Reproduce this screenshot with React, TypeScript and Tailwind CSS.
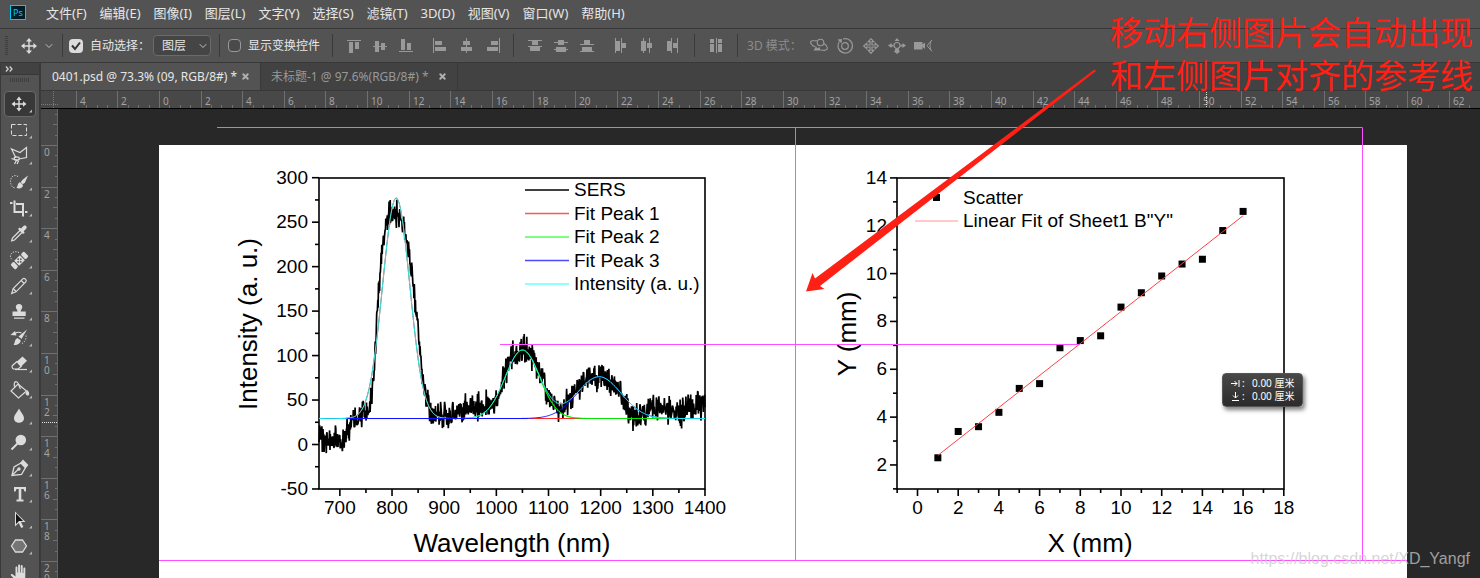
import React from 'react';
import { ChevronDown, X } from 'lucide-react';

type Rect = [number, number, number, number];

const MENUS = ['文件(F)', '编辑(E)', '图像(I)', '图层(L)', '文字(Y)', '选择(S)', '滤镜(T)', '3D(D)', '视图(V)', '窗口(W)', '帮助(H)'];

// Align / distribute glyphs: lists of [x, y, width, height]
const ALIGN_VERTICAL: { name: string; rects: Rect[] }[] = [
  { name: 'Align top', rects: [[1, 2, 14, 1], [3, 4, 4, 11], [9, 4, 4, 7]] },
  { name: 'Align middle', rects: [[1, 8, 14, 1], [3, 3, 4, 11], [9, 5, 4, 7]] },
  { name: 'Align bottom', rects: [[1, 13, 14, 1], [3, 1, 4, 11], [9, 5, 4, 7]] },
];
const ALIGN_HORIZONTAL: { name: string; rects: Rect[] }[] = [
  { name: 'Align left', rects: [[1, 0, 1, 15], [3, 3, 7, 4], [3, 9, 11, 4]] },
  { name: 'Align center', rects: [[8, 0, 1, 15], [5, 3, 7, 4], [3, 9, 11, 4]] },
  { name: 'Align right', rects: [[15, 0, 1, 15], [7, 3, 7, 4], [3, 9, 11, 4]] },
];
const DISTRIBUTE_VERTICAL: { name: string; rects: Rect[] }[] = [
  { name: 'Distribute top', rects: [[1, 2, 14, 1], [5, 3, 6, 4], [1, 8, 14, 1], [3, 9, 10, 4]] },
  { name: 'Distribute middle', rects: [[1, 4, 14, 1], [5, 2, 6, 5], [1, 11, 14, 1], [3, 9, 10, 5]] },
  { name: 'Distribute bottom', rects: [[1, 6, 14, 1], [5, 2, 6, 4], [1, 13, 14, 1], [3, 9, 10, 4]] },
];
const DISTRIBUTE_HORIZONTAL: { name: string; rects: Rect[] }[] = [
  { name: 'Distribute left', rects: [[2, 0, 1, 15], [3, 3, 4, 10], [8, 0, 1, 15], [9, 5, 4, 5]] },
  { name: 'Distribute center', rects: [[4, 0, 1, 15], [2, 3, 5, 10], [10, 0, 1, 15], [8, 5, 5, 5]] },
  { name: 'Distribute right', rects: [[6, 0, 1, 15], [2, 3, 4, 10], [12, 0, 1, 15], [8, 5, 4, 5]] },
];
const AUTO_ALIGN: { name: string; rects: Rect[] }[] = [
  { name: 'Auto-align layers', rects: [[2, 1, 4, 4], [2, 6, 4, 8], [8, 0, 1, 15], [10, 1, 4, 4], [10, 6, 4, 8]] },
];

const GlyphGroup: React.FC<{ items: { name: string; rects: Rect[] }[] }> = ({ items }) => (
  <div className="flex items-center gap-[10px]">
    {items.map((item) => (
      <button key={item.name} type="button" aria-label={item.name} className="text-[#999999]">
        <svg width="16" height="16" viewBox="0 0 16 16" fill="currentColor" shapeRendering="crispEdges">
          {item.rects.map(([x, y, w, h], i) => <rect key={i} x={x} y={y} width={w} height={h} />)}
        </svg>
      </button>
    ))}
  </div>
);

const Separator: React.FC = () => <span className="w-px h-[23px] bg-[#3a3a3a] shrink-0" />;

const MoveGlyph: React.FC<{ size: number }> = ({ size }) => (
  <svg width={size} height={size} viewBox="0 0 16 16" fill="#dcdcdc">
    <path d="M7.3 3v4.3H3v1.4h4.3V13h1.4V8.7H13V7.3H8.7V3z" />
    <path d="M8 0l3 3.6H5zM8 16l3-3.6H5zM0 8l3.6-3v6zM16 8l-3.6-3v6z" />
  </svg>
);

const Mode3DIcons: React.FC = () => (
  <div className="flex items-center gap-[8px] ml-2">
    <button type="button" aria-label="Orbit" className="text-[#999999]">
      <svg width="18" height="16" viewBox="0 0 18 16" fill="none" stroke="currentColor" strokeWidth="1.1">
        <circle cx="10.500" cy="4.500" r="3.300" />
        <path d="M7 2.800H2.500C.8 2.800.2 4.200.8 5.300 1.500 7 3.500 8.300 5.500 9M14 5.500c2.500 1.700 4 4 3 5.700-1 1.300-3.500 1.500-6.500.6" />
        <path d="M3.500 12.500h7L9.500 9 7.500 10.500 6 8.500z" fill="currentColor" stroke="none" />
      </svg>
    </button>
    <button type="button" aria-label="Roll" className="text-[#999999]">
      <svg width="18" height="16" viewBox="0 0 18 16" fill="none" stroke="currentColor" strokeWidth="1.2">
        <circle cx="9" cy="8" r="3.300" />
        <path d="M3.500 3.500A7.200 7.200 0 1 0 7 1" />
        <path d="M1.500 1.500l4.500-.5-.5 4.500z" fill="currentColor" stroke="none" />
      </svg>
    </button>
    <button type="button" aria-label="Drag" className="text-[#999999]">
      <svg width="18" height="16" viewBox="0 0 18 16" fill="none" stroke="currentColor" strokeWidth="1.2">
        <path d="M9 .7l2.700 3H10v3.300h3.300V5.300l3 2.700-3 2.700V9H10v3.300h1.700l-2.700 3-2.700-3H8V9H4.700v1.700l-3-2.700 3-2.700V7H8V3.700H6.300z" />
      </svg>
    </button>
    <button type="button" aria-label="Slide" className="text-[#999999]">
      <svg width="18" height="16" viewBox="0 0 18 16" fill="currentColor">
        <circle cx="9" cy="7.500" r="3" fill="none" stroke="currentColor" strokeWidth="1.200" />
        <path d="M9 0l2.500 3h-5zM0 7.500L3.500 5v1.800h2v1.600h-2V10zM18 7.500L14.500 5v1.800h-2v1.600h2V10zM7 11h4v2h1.500L9 16l-3.500-3H7z" />
      </svg>
    </button>
    <button type="button" aria-label="3D camera" className="text-[#999999]">
      <svg width="19" height="16" viewBox="0 0 19 16" fill="currentColor">
        <path d="M0 4h8.500v2.500L11 4.500v6.500L8.500 9v2.500H0z" />
        <path d="M18 2l-5 5.700 5 5.700M16.800 3.500c-1 3-1 5.500 0 8.500" fill="none" stroke="currentColor" strokeWidth="1" />
      </svg>
    </button>
  </div>
);

const TOOLS: { name: string; art: React.ReactNode }[] = [
  {
    name: 'Move',
    art: (
      <g fill="#dcdcdc">
        <path d="M11.300 7v4.300H7v1.400h4.300V17h1.400v-4.300H17v-1.400h-4.300V7z" />
        <path d="M12 4.500L14.700 8H9.300zM12 19.500l2.700-3.500H9.300zM4.500 12L8 9.300v5.400zM19.500 12L16 9.300v5.400z" />
      </g>
    ),
  },
  { name: 'Marquee', art: <rect x="4.500" y="6.500" width="15" height="11" fill="none" stroke="#dcdcdc" strokeDasharray="4 2" /> },
  {
    name: 'Polygonal lasso',
    art: (
      <g fill="none" stroke="#dcdcdc" strokeWidth="1.200">
        <path d="M9 14L4.500 5l8.500 3.500L19.500 3.500v10L12 15" />
        <ellipse cx="9.700" cy="14.500" rx="2.600" ry="1.600" />
        <path d="M4.500 14.500l7 2.500-1.500 3M10 15.500L7.500 20" />
      </g>
    ),
  },
  {
    name: 'Quick selection',
    art: (
      <g>
        <path d="M11 6.500C7 4 3.500 7 3.500 11.500S6 18 8.500 18" fill="none" stroke="#dcdcdc" strokeDasharray="1.200 1.400" />
        <path d="M21 5.500l-3 7-2.200 1.800-2.200-2 2-2.500z" fill="#dcdcdc" />
        <path d="M13 12.300l3 2.700c0 3-3.500 4.500-6.700 2.800 1.500-.5 1.200-5 3.700-5.500z" fill="#dcdcdc" />
      </g>
    ),
  },
  { name: 'Crop', art: <path d="M3 7h2.500M7.500 4.500V16H17M9 8h7v12.500M18 16H20.500" fill="none" stroke="#dcdcdc" strokeWidth="2" /> },
  {
    name: 'Eyedropper',
    art: (
      <g>
        <path d="M13 8.500l-7.500 7.500-.8 2.800 2.800-.8L15 10.500" fill="none" stroke="#dcdcdc" strokeWidth="1.300" />
        <path d="M11 7l1.500-1.500 1.500 1L16.500 4c1.800-1.500 4.200.8 2.700 2.700l-2.500 2.500 1 1.500L16 12z" fill="#dcdcdc" />
      </g>
    ),
  },
  {
    name: 'Healing brush',
    art: (
      <g>
        <path d="M12 4.500c-4-2-8.500 0-8.500 3.700 0 1.500.5 2.500 1.500 3.300" fill="none" stroke="#dcdcdc" strokeDasharray="1.200 1.400" />
        <g transform="rotate(-45 12.500 12.500)" fill="#dcdcdc">
          <rect x="3" y="9" width="4.500" height="7" rx="1.500" />
          <rect x="8.500" y="9" width="8" height="7" />
          <rect x="17.500" y="9" width="4.500" height="7" rx="1.500" />
          <g fill="#535353">
            <circle cx="12.500" cy="10.700" r=".9" />
            <circle cx="10.600" cy="12.500" r=".9" />
            <circle cx="14.400" cy="12.500" r=".9" />
            <circle cx="12.500" cy="14.300" r=".9" />
          </g>
        </g>
      </g>
    ),
  },
  {
    name: 'Pencil',
    art: (
      <g fill="none" stroke="#dcdcdc" strokeWidth="1.200">
        <path d="M4.700 19.500l1.500-5L16 4.700c1.500-1 4 1.300 3 3L9 17.800z" />
        <path d="M6.200 14.500L9 17.500M14.200 6.500l3 3" />
      </g>
    ),
  },
  { name: 'Clone stamp', art: <path d="M12 4c2.200 0 3.300 1.500 3.300 3 0 2-1.600 2.500-1.600 4.500h5v4.500H5.500v-4.500h5c0-2-1.700-2.500-1.700-4.500 0-1.500 1-3 3.200-3zM7 17.500h10.500v1.300H7z" fill="#dcdcdc" /> },
  {
    name: 'History brush',
    art: (
      <g>
        <path d="M20 3.500l-5.500 9.500-3-2.500z" fill="#dcdcdc" />
        <path d="M10.500 12l3.200 2.200c0 3.300-3.500 5.300-7.200 4.800 1.800-2 .7-5.500 4-7z" fill="#dcdcdc" />
        <path d="M8 7.500c2-1.500 4.500-1.500 6.500-.5" fill="none" stroke="#dcdcdc" strokeWidth="1.200" />
        <path d="M3.500 9L8 5l1.500 4.500z" fill="#dcdcdc" />
        <path d="M19 9.500c.5 4-1.500 7-5 8.500" fill="none" stroke="#dcdcdc" strokeDasharray="1.200 1.600" />
      </g>
    ),
  },
  {
    name: 'Eraser',
    art: (
      <g>
        <path d="M10 9.500l5.500-5 4.500 4.200-5.800 5.800z" fill="#dcdcdc" />
        <path d="M10 9.500l-4.500 4c-.8.800-.5 3 1 3.500h4.500l3.200-2.500z" fill="none" stroke="#dcdcdc" strokeWidth="1.200" />
        <path d="M8 17.500h12" stroke="#dcdcdc" strokeWidth="1.200" />
      </g>
    ),
  },
  {
    name: 'Paint bucket',
    art: (
      <g fill="none" stroke="#dcdcdc" strokeWidth="1.200">
        <path d="M11 6l8.500 7-8 7L4 13z" />
        <path d="M8 9.500C6 5 8 3 10 4s2 5 3.500 7" />
        <path d="M20 12c2 1.500 2.500 3 2 5-1.500 1.500-3 0-3.500-1.500z" fill="#dcdcdc" stroke="none" />
      </g>
    ),
  },
  { name: 'Blur', art: <path d="M12 4.500c2 4 5 6.500 5 9.700 0 6-10 6-10 0 0-3.200 3-5.700 5-9.700z" fill="#dcdcdc" /> },
  {
    name: 'Dodge',
    art: (
      <g>
        <circle cx="13.800" cy="10" r="5.300" fill="#dcdcdc" />
        <path d="M10.500 13.500L4.500 19.500" stroke="#dcdcdc" strokeWidth="2" />
      </g>
    ),
  },
  {
    name: 'Pen',
    art: (
      <g fill="none" stroke="#dcdcdc" strokeWidth="1.300">
        <path d="M5 19.500l2-8.500 7-4 4.500 4.500-4 7z" />
        <path d="M14 7l2-2.500 4.500 4.500-2 2.500z" fill="#dcdcdc" />
        <path d="M5 19.500l6.500-6.500" />
        <circle cx="12" cy="13" r="1" fill="#dcdcdc" />
      </g>
    ),
  },
  { name: 'Type', art: <path d="M7 5h12v4.500h-1.500l-1-2.500h-2.200v10.500h2.200V19.500h-7v-2h2.200V7H9.500l-1 2.500H7z" fill="#dcdcdc" /> },
  {
    name: 'Path selection',
    art: (
      <g>
        <path d="M8 3.500v15l3.700-3.500L14.200 20l2.200-1L14 14h4.500z" fill="#dcdcdc" />
        <path d="M9 5.500v10.500l3-3h4z" fill="#161616" />
      </g>
    ),
  },
  { name: 'Polygon', art: <path d="M8.500 6h7l4 6-4 6h-7l-4-6z" fill="#757575" stroke="#dcdcdc" strokeWidth="1.300" /> },
  {
    name: 'Hand',
    art: (
      <path
        d="M9.500 22c-1-1-2.200-3-5.500-6.500-.8-1.200.6-2 1.600-1.300L8.500 16.500V7.500c0-1.500 1.900-1.500 1.900 0v5h.7V5.500c0-1.500 2-1.500 2 0v7h.7V6c0-1.500 1.900-1.500 1.900 0v7h.7V8.500c0-1.500 1.900-1.500 1.900 0V16c0 3-1 4.500-2 6z"
        fill="#dcdcdc"
      />
    ),
  },
];

const Toolbar: React.FC = () => (
  <aside className="w-[41px] shrink-0 border-l border-r-2 border-[#3a3a3a] bg-[#535353]">
    <div className="h-3 bg-[#424242] border-b border-[#383838] flex items-center pl-1">
      <svg width="8" height="6" viewBox="0 0 8 6" fill="none" stroke="#d0d0d0" strokeWidth="1.300">
        <path d="M1 .5L3.200 3 1 5.500M4.700 .5L7 3 4.700 5.500" />
      </svg>
    </div>
    <div className="h-4 pt-[3px] pl-[9px]">
      <svg width="20" height="4" viewBox="0 0 20 4">
        {Array.from({ length: 10 }, (_, i) => <rect key={i} x={i * 2} y="0" width="1" height="4" fill="#3e3e3e" />)}
      </svg>
    </div>
    <div className="flex flex-col">
      {TOOLS.map((tool, i) => (
        <button
          key={tool.name}
          type="button"
          aria-label={tool.name}
          className={`mx-[3px] h-[26px] w-8 flex items-start rounded-sm border ${i === 0 ? 'bg-[#383838] border-[#696969]' : 'border-transparent'}`}
        >
          <svg width="24" height="24" viewBox="0 0 24 24" className="ml-[2px] shrink-0 overflow-visible">
            {tool.art}
            {i < TOOLS.length - 1 && <path d="M25 17.500V20.500H22z" fill="#b8b8b8" />}
          </svg>
        </button>
      ))}
    </div>
  </aside>
);

// One ruler unit is 20.8px at the current zoom; the document origin is at (101, 36) in the canvas
const UNIT = 20.8;

const HorizontalRuler: React.FC = () => (
  <svg className="flex-1 h-[17px] font-['Noto_Sans',sans-serif] text-[10px]" shapeRendering="crispEdges">
    {Array.from({ length: 136 }, (_, i) => {
      const step = i - 8;
      const x = Math.round(101 + (step * UNIT) / 2);
      const major = step % 4 === 0;
      return (
        <g key={i}>
          <rect x={x} y={major ? 0 : 14} width="1" height={major ? 17 : 3} fill="#707070" />
          {major && <text x={x + 4} y="14" fill="#a3a3a3">{Math.abs(step / 2)}</text>}
        </g>
      );
    })}
    <path d="M1148.500 1V17" stroke="#e0e0e0" strokeDasharray="1 1" />
  </svg>
);

const VerticalRuler: React.FC = () => (
  <svg className="w-[17px] shrink-0 h-full bg-[#484848] font-['Noto_Sans',sans-serif] text-[10px]" shapeRendering="crispEdges">
    {Array.from({ length: 46 }, (_, i) => {
      const step = i - 3;
      const y = Math.round(36 + (step * UNIT) / 2);
      const major = step % 4 === 0;
      const tick = major ? 17 : step % 2 === 0 ? 5 : 3;
      return (
        <g key={i}>
          <rect x={17 - tick} y={y} width={tick} height="1" fill="#707070" />
          {major &&
            String(Math.abs(step / 2)).split('').map((digit, n) => (
              <text key={n} x="3" y={y + 11 + n * 10} fill="#a3a3a3">{digit}</text>
            ))}
        </g>
      );
    })}
    <rect x="16" y="0" width="1" height="100%" fill="#666666" />
    <path d="M1 313.500H16" stroke="#e0e0e0" strokeDasharray="1 1" />
  </svg>
);

// Spectrum chart
const sx = (v: number) => 160 + (v - 660) * 0.5216;
const sy = (v: number) => 299.5 - v * 0.8893;

const SPECTRUM: [number, number][] = [
  [660, 14], [668, 6], [690, 3], [700, 6], [710, 10], [720, 24], [735, 28], [745, 40], [752, 34], [762, 58], [768, 110], [773, 160],
  [778, 200], [783, 228], [788, 248], [793, 260], [803, 259], [812, 256], [822, 246], [832, 218], [842, 178], [851, 122], [858, 75],
  [865, 50], [875, 36], [890, 31], [910, 31], [930, 37], [942, 43], [958, 37], [965, 40], [980, 42], [1000, 48], [1010, 68], [1020, 88],
  [1035, 103], [1050, 107], [1065, 103], [1080, 86], [1090, 70], [1100, 54], [1110, 46], [1120, 41], [1130, 43], [1145, 54],
  [1160, 66], [1180, 74], [1200, 76], [1220, 70], [1235, 60], [1250, 45], [1260, 34], [1275, 32], [1290, 42], [1310, 42], [1330, 40],
  [1345, 35], [1360, 38], [1380, 42], [1400, 48],
];

const buildSpectrum = () => {
  let seed = 20;
  const random = () => {
    seed = (seed * 16807) % 2147483647;
    return seed / 2147483647;
  };
  const points: string[] = [];
  let segment = 0;
  for (let v = 660; v <= 1400; v += 0.7) {
    while (segment < SPECTRUM.length - 2 && SPECTRUM[segment + 1][0] < v) segment++;
    const [x0, y0] = SPECTRUM[segment];
    const [x1, y1] = SPECTRUM[segment + 1];
    const mean = y0 + ((y1 - y0) * (v - x0)) / (x1 - x0);
    const noise = (random() + random() + random() - 1.5) * 15;
    points.push(`${sx(v).toFixed(1)},${sy(mean + noise).toFixed(1)}`);
  }
  return points.join(' ');
};

const BASELINE = 29.2;
const PEAKS: Rect[] = [[808, 248, 26, 0], [1050, 77, 33, 0], [1197, 47, 42, 0]];
const gauss = (v: number, [center, height, sigma]: Rect) => height * Math.exp(-((v - center) ** 2) / (2 * sigma * sigma));
const buildCurve = (peaks: Rect[]) => {
  const points: string[] = [];
  for (let v = 660; v <= 1400; v += 2) {
    const total = peaks.reduce((sum, peak) => sum + gauss(v, peak), BASELINE);
    points.push(`${sx(v).toFixed(1)},${sy(total).toFixed(1)}`);
  }
  return points.join(' ');
};

const LEGEND = [
  { label: 'SERS', color: '#000000' },
  { label: 'Fit Peak 1', color: '#ff5555' },
  { label: 'Fit Peak 2', color: '#55ff55' },
  { label: 'Fit Peak 3', color: '#4a4aff' },
  { label: 'Intensity (a. u.)', color: '#66ffff' },
];

const SpectrumChart: React.FC = () => (
  <svg width="636" height="433" viewBox="0 0 636 433" className="shrink-0 font-['Liberation_Sans',Arial,sans-serif] text-[19px]">
    <g stroke="#000000" strokeWidth="1.600" fill="none">
      <rect x="160" y="33" width="386" height="311" />
      {Array.from({ length: 15 }, (_, i) => (
        <path key={i} d={`M160 ${sy(i * 25 - 50)}h${i % 2 ? -4 : -7}`} />
      ))}
      {Array.from({ length: 15 }, (_, i) => (
        <path key={i} d={`M${sx(700 + i * 50)} 344v${i % 2 ? 4 : 7}`} />
      ))}
    </g>
    {[300, 250, 200, 150, 100, 50, 0, -50].map((v) => (
      <text key={v} x="149" y={sy(v) + 6} textAnchor="end">{v}</text>
    ))}
    {[700, 800, 900, 1000, 1100, 1200, 1300, 1400].map((v) => (
      <text key={v} x={sx(v)} y="369" textAnchor="middle">{v}</text>
    ))}
    <polyline points={buildSpectrum()} fill="none" stroke="#000000" strokeWidth="1.700" strokeLinejoin="bevel" />
    <g fill="none" strokeWidth="1">
      <polyline points={buildCurve([PEAKS[0]])} stroke="#ff2020" />
      <polyline points={buildCurve([PEAKS[1]])} stroke="#00f000" />
      <polyline points={buildCurve([PEAKS[2]])} stroke="#1010ff" />
      <polyline points={buildCurve([PEAKS[0]]).split(' ').slice(205, 253).join(' ')} stroke="#ff2020" />
      <polyline points={buildCurve([PEAKS[1]]).split(' ').slice(205, 340).join(' ')} stroke="#00e800" />
      <polyline points={buildCurve(PEAKS).split(' ').slice(0, 32).join(' ')} stroke="#20f0f0" />
      <polyline points={buildCurve(PEAKS).split(' ').slice(31).join(' ')} stroke="#20f0f0" />
      <path d={`M${sx(715)} ${sy(BASELINE)}H${sx(1060)}`} stroke="#1010ff" />
    </g>
    {LEGEND.map((item, i) => (
      <g key={item.label}>
        <path d={`M366 ${45 + i * 23.5}h44`} stroke={item.color} strokeWidth="1.300" />
        <text x="415" y={51 + i * 23.5}>{item.label}</text>
      </g>
    ))}
    <text x="353" y="407" textAnchor="middle" className="text-[26px]">Wavelength (nm)</text>
    <text transform="translate(98 179) rotate(-90)" textAnchor="middle" className="text-[26px]">Intensity (a. u.)</text>
  </svg>
);

// Scatter chart
const px = (v: number) => 122.5 + v * 20.35;
const py = (v: number) => 367.8 - v * 23.92;
const SAMPLES = [2.3, 3.4, 3.6, 4.2, 5.2, 5.4, 6.9, 7.2, 7.4, 8.6, 9.2, 9.9, 10.4, 10.6, 11.8, 12.6];

const ScatterChart: React.FC = () => (
  <svg width="612" height="433" viewBox="0 0 612 433" className="shrink-0 font-['Liberation_Sans',Arial,sans-serif] text-[19px]">
    <g stroke="#000000" strokeWidth="1.600" fill="none">
      <rect x="102" y="33" width="387" height="311" />
      {Array.from({ length: 14 }, (_, i) => (
        <path key={i} d={`M102 ${py(i + 1)}h${i % 2 ? -7 : -4}`} />
      ))}
      {Array.from({ length: 20 }, (_, i) => (
        <path key={i} d={`M${px(i - 1)} 344v${i % 2 ? 7 : 4}`} />
      ))}
    </g>
    {[14, 12, 10, 8, 6, 4, 2].map((v) => (
      <text key={v} x="92" y={py(v) + 6} textAnchor="end">{v}</text>
    ))}
    {[0, 2, 4, 6, 8, 10, 12, 14, 16, 18].map((v) => (
      <text key={v} x={px(v)} y="369" textAnchor="middle">{v}</text>
    ))}
    {SAMPLES.map((v, i) => <rect key={i} x={px(i + 1) - 3.5} y={py(v) - 3.5} width="7" height="7" />)}
    <path d={`M${px(1)} ${py(2.4)}L${px(16)} ${py(12.42)}`} stroke="#ff4040" strokeWidth="1" />
    <rect x="138" y="49" width="7" height="7" />
    <path d="M120 76h43" stroke="#ffb8b8" strokeWidth="1.600" />
    <text x="168" y="59">Scatter</text>
    <text x="168" y="82">Linear Fit of Sheet1 B"Y"</text>
    <text x="295" y="407" textAnchor="middle" className="text-[26px]">X (mm)</text>
    <text transform="translate(61 189) rotate(-90)" textAnchor="middle" className="text-[26px]">Y (mm)</text>
  </svg>
);

const Readout: React.FC = () => (
  <div className="absolute left-[1164px] top-[264px] w-[81px] py-[3px] pl-[8px] rounded bg-gradient-to-b from-[#484848] to-[#2b2b2b] border border-[#555555] shadow-[2px_3px_4px_rgba(0,0,0,0.5)] text-white text-[10px] leading-[13px]">
    <div className="flex items-center whitespace-nowrap">
      <svg width="9" height="9" viewBox="0 0 9 9" fill="none" stroke="white"><path d="M0 4.500H6M3.500 2L6 4.500 3.500 7M8 1V8" /></svg>
      <span className="w-3 pl-[2px]">:</span>
      <span>0.00 厘米</span>
    </div>
    <div className="flex items-center whitespace-nowrap">
      <svg width="9" height="9" viewBox="0 0 9 9" fill="none" stroke="white"><path d="M4.500 0V6M2 3.500L4.500 6 7 3.500M1 8.500H8" /></svg>
      <span className="w-3 pl-[2px]">:</span>
      <span>0.00 厘米</span>
    </div>
  </div>
);

const Canvas: React.FC = () => (
  <div className="relative flex-1 min-w-0 overflow-hidden bg-[#282828] pt-9 pl-[101px] pr-[73px]">
    <div className="flex h-full bg-white overflow-hidden">
      <SpectrumChart />
      <ScatterChart />
    </div>
    {/* smart guides */}
    <svg className="absolute inset-0 w-full h-full pointer-events-none" fill="none" stroke="#ff4dff" strokeWidth="1">
      <path d="M159 18.500H1304.500V451M737.500 19V451M101 451.500H1349M442 235.500H1022" />
    </svg>
    <Readout />
  </div>
);

const App: React.FC = () => {
  return (
    <div className="relative h-screen overflow-hidden flex flex-col bg-[#535353] text-[#e6e6e6] text-xs font-['Noto_Sans','Noto_Sans_CJK_SC',sans-serif]">
      <header className="h-[29px] shrink-0 flex items-center border-b border-[#383838] pl-[10px] pb-[3px]">
        <div className="w-4 h-[15px] border border-[#00c8ff] bg-[#001e28] text-[#00c8ff] text-[9px] leading-[13px] text-center">Ps</div>
        <nav className="flex gap-[13px] ml-5 text-[13px] leading-5">
          {MENUS.map((menu) => <button key={menu} type="button" className="whitespace-nowrap">{menu}</button>)}
        </nav>
      </header>

      <div className="h-[34px] shrink-0 flex items-center border-b border-[#383838] pl-[5px] whitespace-nowrap">
        <svg width="3" height="20" viewBox="0 0 3 20">
          {Array.from({ length: 10 }, (_, i) => <rect key={i} x="0" y={i * 2} width="3" height="1" fill="#3e3e3e" />)}
        </svg>
        <button type="button" aria-label="Current tool" className="flex items-center gap-[6px] ml-[13px] mr-[7px]">
          <MoveGlyph size={16} />
          <ChevronDown size={12} className="text-[#c0c0c0]" />
        </button>
        <Separator />
        <label className="flex items-center gap-[7px] ml-[6px]">
          <span className="relative flex">
            <input type="checkbox" defaultChecked className="appearance-none w-[14px] h-[14px] rounded-sm bg-[#dcdcdc]" />
            <svg className="absolute inset-0 pointer-events-none" width="14" height="14" viewBox="0 0 14 14" fill="none" stroke="#333333" strokeWidth="2">
              <path d="M3 6.500L6 10 11 3.500" />
            </svg>
          </span>
          自动选择：
        </label>
        <div className="relative ml-[3px] mr-2">
          <select aria-label="Auto-select target" className="appearance-none block w-[58px] h-[21px] pl-2 rounded-sm border border-[#6a6a6a] bg-[#454545] text-[#e6e6e6]">
            <option>图层</option>
          </select>
          <ChevronDown size={12} className="absolute right-[2px] top-[5px] text-[#c0c0c0] pointer-events-none" />
        </div>
        <Separator />
        <label className="flex items-center gap-[7px] ml-2 mr-3">
          <input type="checkbox" className="appearance-none w-[13px] h-[13px] rounded-sm border border-[#999999] bg-[#4a4a4a]" />
          显示变换控件
        </label>
        <Separator />
        <div className="flex items-center gap-[18px] mx-[13px]">
          <GlyphGroup items={ALIGN_VERTICAL} />
          <GlyphGroup items={ALIGN_HORIZONTAL} />
        </div>
        <Separator />
        <div className="flex items-center gap-[18px] mx-[13px]">
          <GlyphGroup items={DISTRIBUTE_VERTICAL} />
          <GlyphGroup items={DISTRIBUTE_HORIZONTAL} />
        </div>
        <Separator />
        <div className="mx-[13px]"><GlyphGroup items={AUTO_ALIGN} /></div>
        <Separator />
        <span className="ml-[9px] text-[#8c8c8c]">3D 模式：</span>
        <Mode3DIcons />
      </div>

      <div className="flex flex-1 min-h-0">
        <Toolbar />
        <main className="flex-1 min-w-0 flex flex-col">
          <div className="h-[28px] shrink-0 flex bg-[#424242] border-b border-[#383838] whitespace-nowrap">
            <div className="w-[220px] flex items-center justify-between pl-[11px] pr-[10px] bg-[#535353] border-r border-[#383838]">
              <button type="button">0401.psd @ 73.3% (09, RGB/8#) *</button>
              <button type="button" aria-label="Close 0401.psd"><X size={9} strokeWidth={5} className="text-[#b0b0b0]" /></button>
            </div>
            <div className="w-[197px] flex items-center justify-between pl-[10px] pr-[10px] border-r border-[#383838] text-[#999999]">
              <button type="button">未标题-1 @ 97.6%(RGB/8#) *</button>
              <button type="button" aria-label="Close 未标题-1"><X size={9} strokeWidth={5} className="text-[#b0b0b0]" /></button>
            </div>
          </div>
          <div className="flex shrink-0 bg-[#484848] border-b border-black">
            <svg width="17" height="17" viewBox="0 0 17 17" stroke="#7a7a7a" strokeDasharray="1 1">
              <path d="M12.500 0V17M0 13.500H17" />
            </svg>
            <HorizontalRuler />
          </div>
          <div className="flex flex-1 min-h-0">
            <VerticalRuler />
            <Canvas />
          </div>
        </main>
      </div>

      {/* hand-drawn note on top of the workspace */}
      <svg className="absolute inset-0 w-full h-full pointer-events-none" fill="#ff2015">
        <path d="M806 291.500L812.500 273L815 278.500L1094.500 69.500L1096 71L820 286L824.500 289Z" />
      </svg>
      <p className="absolute top-[10px] right-[7px] text-[33px] leading-[43px] text-[#ff2015] whitespace-nowrap font-['Noto_Sans_CJK_SC',sans-serif]">
        移动右侧图片会自动出现
        <br />
        和左侧图片对齐的参考线
      </p>
      <span className="absolute right-[10px] bottom-[8px] text-base leading-[22px] text-[#c8c8c8]/75 font-['Liberation_Sans',Arial,sans-serif]">
        https://blog.csdn.net/XD_Yangf
      </span>
    </div>
  );
};

export default App;
